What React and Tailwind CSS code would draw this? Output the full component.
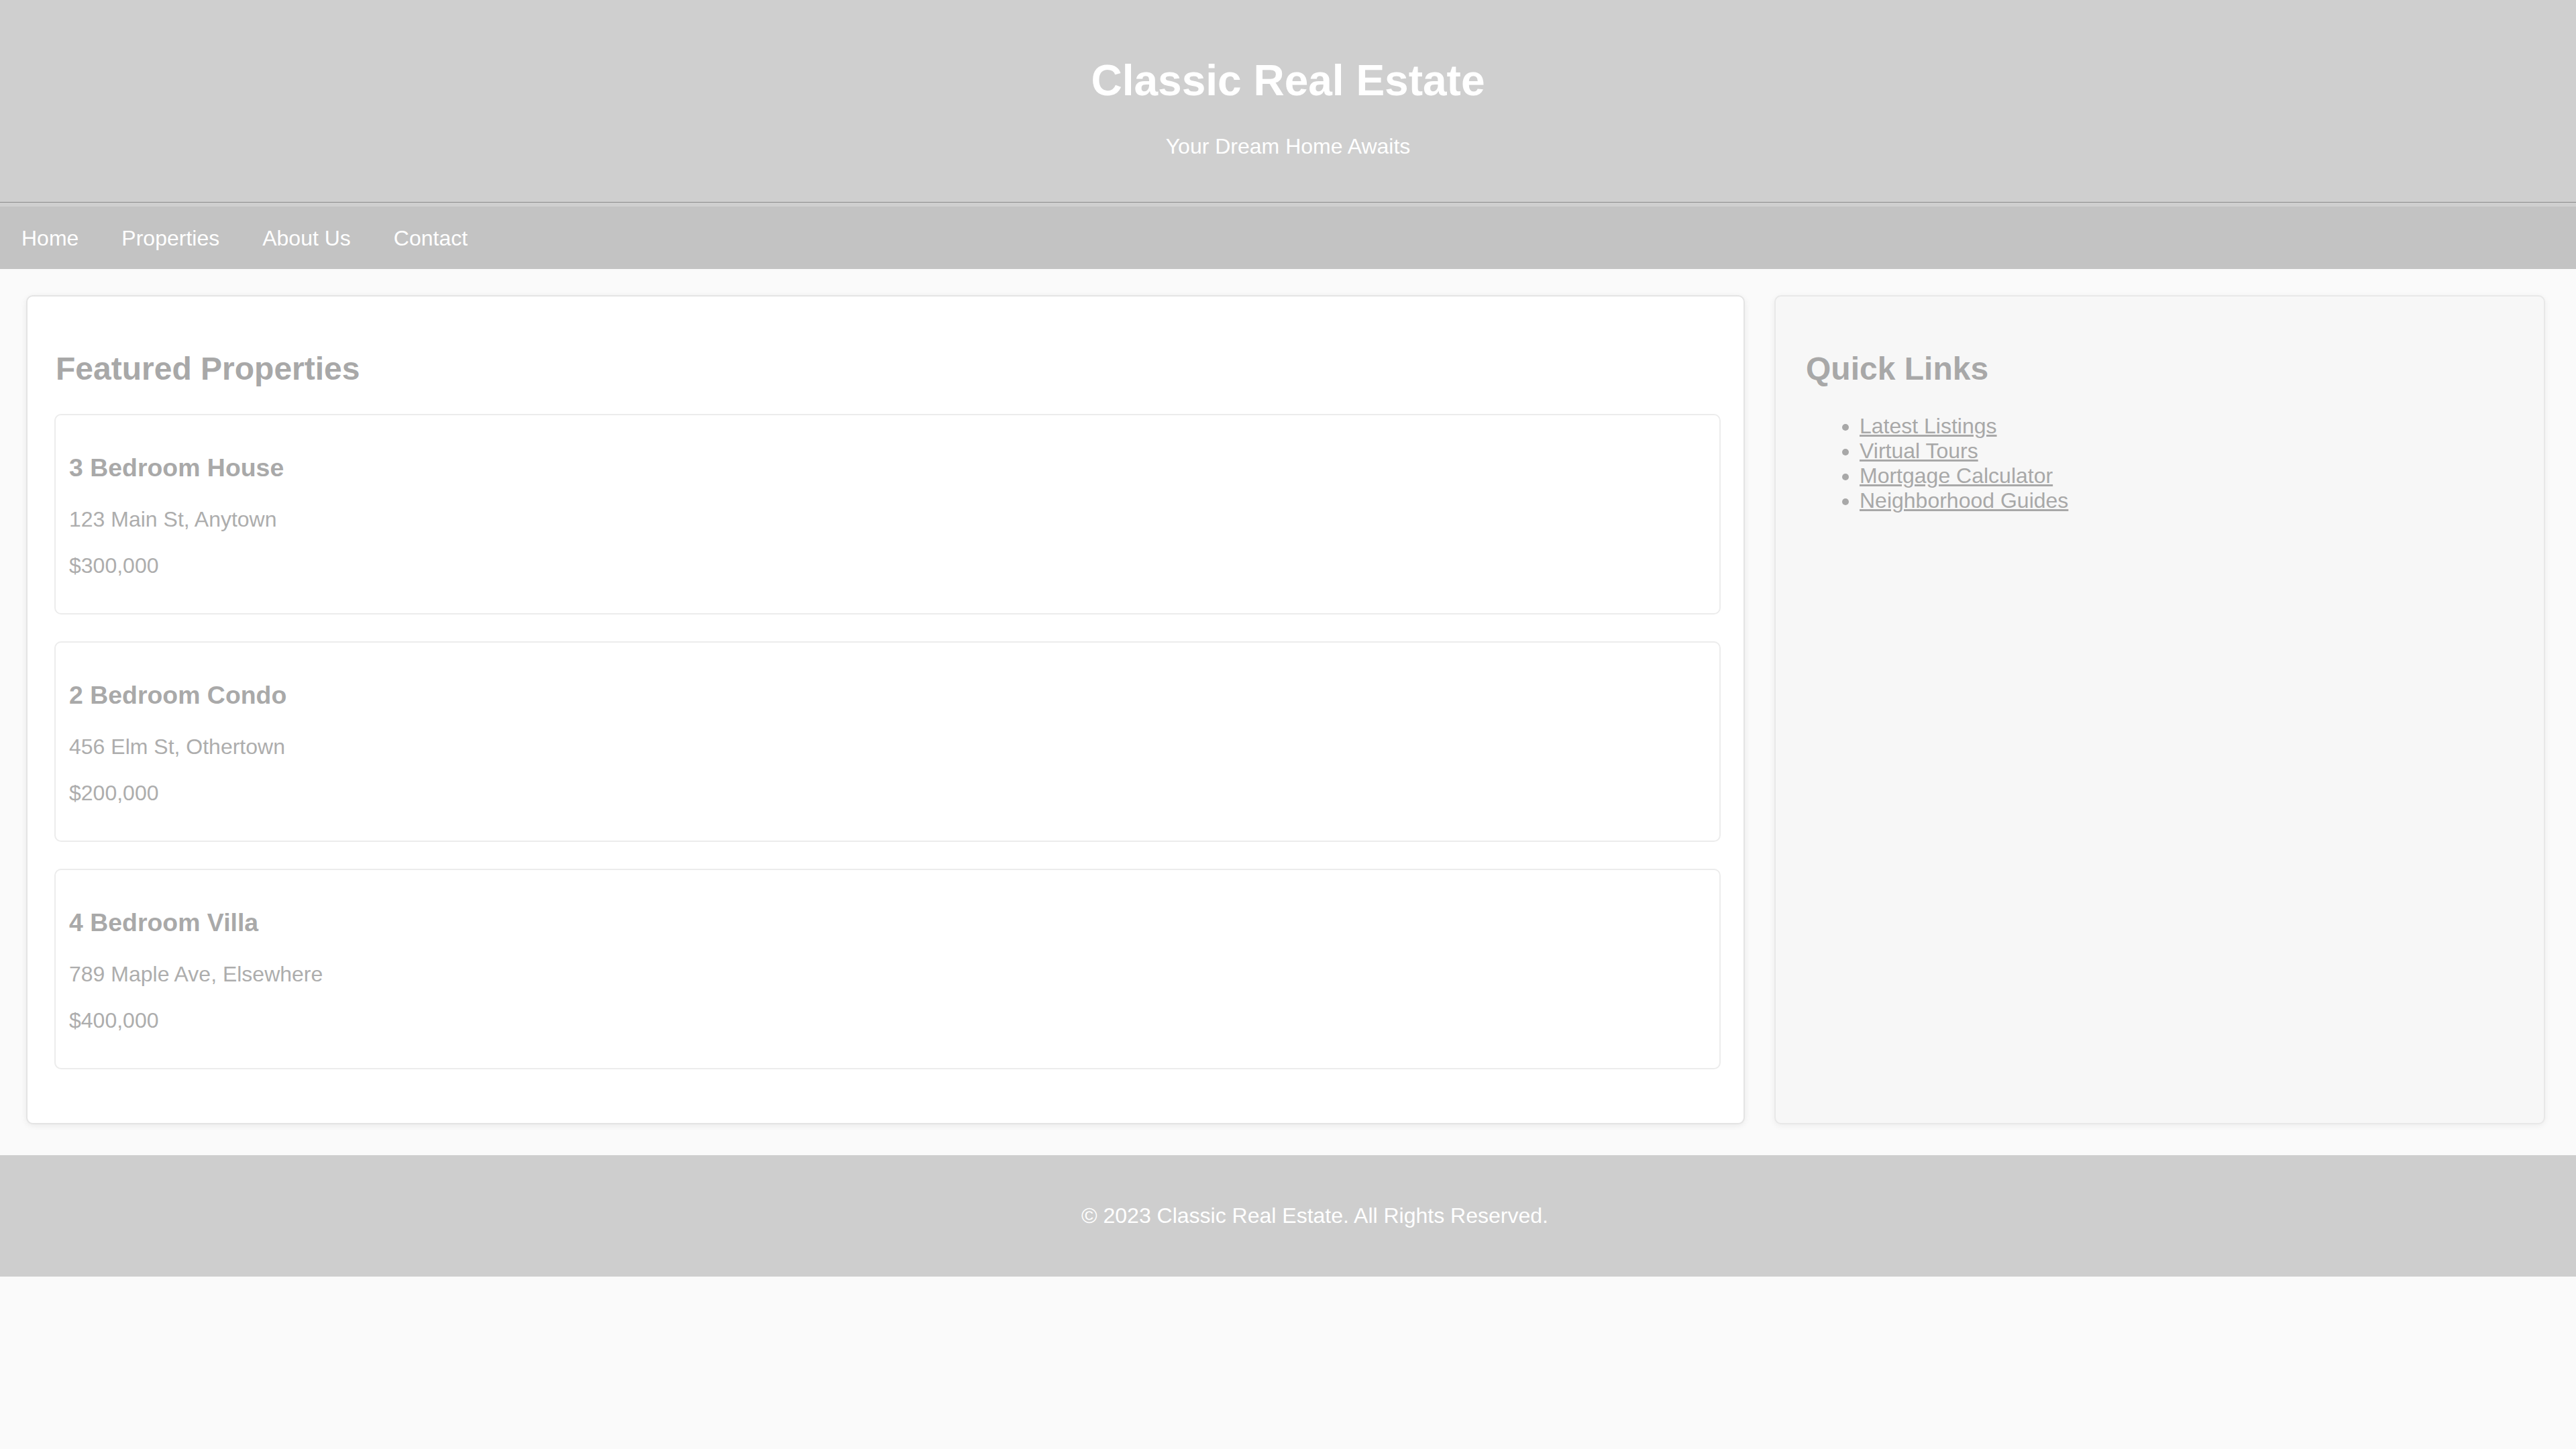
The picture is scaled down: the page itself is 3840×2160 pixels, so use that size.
import React from "react";

const properties = [
  { title: "3 Bedroom House", address: "123 Main St, Anytown", price: "$300,000" },
  { title: "2 Bedroom Condo", address: "456 Elm St, Othertown", price: "$200,000" },
  { title: "4 Bedroom Villa", address: "789 Maple Ave, Elsewhere", price: "$400,000" },
];

const links = ["Latest Listings", "Virtual Tours", "Mortgage Calculator", "Neighborhood Guides"];

function PropertyCard({ p }) {
  return (
    <div className="mb-[40px] -mr-[6px] rounded-[10px] border-2 border-[#ececec] bg-white px-[20px] py-[20px]">
      <h3 className="mt-[37px] text-[37.44px] font-bold leading-[43px] text-[#a9a9a9]">{p.title}</h3>
      <p className="mt-[37px] text-[32px] leading-[37px] text-[#adadad]">{p.address}</p>
      <p className="mt-[32px] mb-[32px] text-[32px] leading-[37px] text-[#adadad]">{p.price}</p>
    </div>
  );
}

export default function App() {
  return (
    <div className="min-h-screen bg-[#fafafa] font-['Liberation_Sans',Arial,sans-serif]">
      {/* header */}
      <header className="bg-[#cfcfcf] text-center text-white">
        <div className="h-[302px] border-b border-[#8c8c8c] pt-[40px]">
          <h1 className="mt-[43px] text-[64px] font-bold leading-[74px]">Classic Real Estate</h1>
          <p className="mt-[43px] text-[32px] leading-[37px]">Your Dream Home Awaits</p>
        </div>
        <div className="h-[6px]" />
      </header>

      {/* nav */}
      <nav className="flex h-[93px] items-center bg-[#c3c3c3]">
        {["Home", "Properties", "About Us", "Contact"].map((n) => (
          <a key={n} href="#" className="px-[32px] pt-[2px] text-[32px] leading-[37px] text-white">
            {n}
          </a>
        ))}
      </nav>

      {/* content */}
      <div className="flex gap-[44px] pb-[46px] pl-[39px] pt-[39px]">
        <main className="w-[2562px] rounded-[10px] border-2 border-[#e4e4e4] bg-white p-[40px] shadow-[0_2px_10px_rgba(0,0,0,0.07)]">
          <h2 className="mt-[40px] mb-[40px] pl-[2px] text-[48px] font-bold leading-[55px] text-[#a8a8a8]">Featured Properties</h2>
          {properties.map((p) => (
            <PropertyCard key={p.title} p={p} />
          ))}
        </main>

        <aside className="w-[1149px] rounded-[10px] border-2 border-[#e8e8e8] bg-[#f7f7f7] py-[40px] pl-[45px] pr-[40px] shadow-[0_2px_10px_rgba(0,0,0,0.06)]">
          <h2 className="mt-[40px] text-[48px] font-bold leading-[55px] text-[#a8a8a8]">Quick Links</h2>
          <ul className="mt-[40px] list-disc pl-[80px] text-[32px] leading-[37px] text-[#a8a8a8] marker:text-[#a8a8a8]">
            {links.map((l) => (
              <li key={l}>
                <a href="#" className="underline">
                  {l}
                </a>
              </li>
            ))}
          </ul>
        </aside>
      </div>

      {/* footer */}
      <footer className="bg-[#cecece] py-[40px] pl-[120px] pr-[40px] text-center text-white">
        <p className="my-[32px] text-[32px] leading-[37px]">© 2023 Classic Real Estate. All Rights Reserved.</p>
      </footer>
    </div>
  );
}
